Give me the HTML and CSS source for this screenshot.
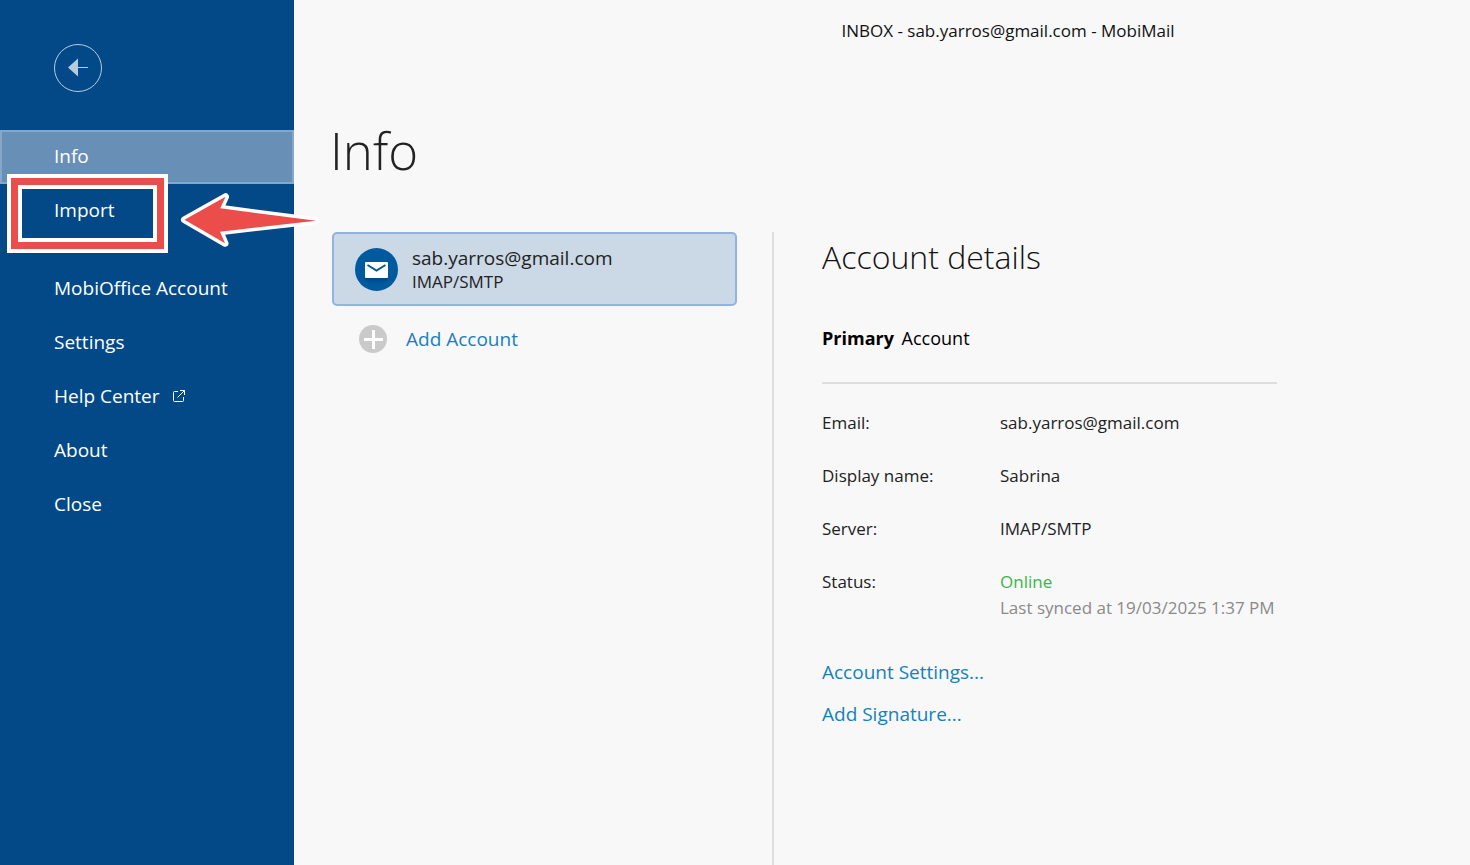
FILE: index.html
```html
<!DOCTYPE html>
<html lang="en">
<head>
  <meta charset="UTF-8" />
  <meta name="viewport" content="width=device-width, initial-scale=1.0" />
  <title>INBOX - sab.yarros@gmail.com - MobiMail</title>
  <link rel="stylesheet" href="styles.css">
</head>
<body>
  <div class="app">
    <aside class="sidebar">
      <button class="back-btn" type="button" aria-label="Back">
        <svg width="48" height="48" viewBox="0 0 48 48">
          <circle cx="24" cy="24" r="23.5" fill="none" stroke="#b5cbe0" />
          <path d="M14 23.5 L24 14.5 V32.5 Z" fill="#b5cbe0" />
          <path d="M23 23.5 H34" stroke="#b5cbe0" />
        </svg>
      </button>
      <nav class="menu">
        <a class="menu-item active" href="#info">Info</a>
        <a class="menu-item" href="#import">Import</a>
        <a class="menu-item spaced" href="#account">MobiOffice Account</a>
        <a class="menu-item" href="#settings">Settings</a>
        <a class="menu-item" href="#help">Help Center
          <svg width="14" height="14" viewBox="0 0 14 14" fill="none" stroke="#fff">
            <path d="M6 2.5 H2.5 Q1.5 2.5 1.5 3.5 V11.5 Q1.5 12.5 2.5 12.5 H10.5 Q11.5 12.5 11.5 11.5 V8" />
            <path d="M8 1.5 H12.5 V6 M12.5 1.5 L5.5 8.5" />
          </svg>
        </a>
        <a class="menu-item" href="#about">About</a>
        <a class="menu-item" href="#close">Close</a>
      </nav>
      <div class="highlight-box"></div>
      <svg class="highlight-arrow" width="142" height="60" viewBox="0 0 142 60">
        <path d="M6.5 29.7 L47.5 6.7 L42.3 18.3 L138 30.7 L42 41.7 L47 53.3 Z" fill="#eb4d4b" stroke="#fff" stroke-width="7" stroke-linejoin="round" paint-order="stroke" />
      </svg>
    </aside>

    <main class="content">
      <header class="title-bar">INBOX - sab.yarros@gmail.com - MobiMail</header>
      <h1>Info</h1>
      <div class="columns">
        <section class="accounts">
          <button class="account-card" type="button">
            <svg width="43" height="43" viewBox="0 0 43 43">
              <defs>
                <linearGradient id="shade" x1="0" y1="0" x2="0" y2="1">
                  <stop offset="0" stop-color="#004585" />
                  <stop offset="1" stop-color="#005a9e" />
                </linearGradient>
              </defs>
              <circle cx="21.5" cy="21.5" r="21.5" fill="#005a9e" />
              <path d="M10 30 H33 L31 36 H12 Z" fill="url(#shade)" />
              <rect x="10" y="14" width="23" height="16" rx="1" fill="#fff" />
              <path d="M12.5 17 L21.5 22.5 L30.5 17" fill="none" stroke="#005a9e" stroke-width="2" />
            </svg>
            <span class="account-text">
              <span class="account-email">sab.yarros@gmail.com</span>
              <span class="account-type">IMAP/SMTP</span>
            </span>
          </button>
          <button class="add-account" type="button">
            <svg width="28" height="28" viewBox="0 0 28 28">
              <circle cx="14" cy="14" r="14" fill="#cacaca" />
              <path d="M5 14.5 H24 M14.5 5 V24" stroke="#fff" stroke-width="3" />
            </svg>
            Add Account
          </button>
        </section>

        <section class="details">
          <h2>Account details</h2>
          <p class="primary"><strong>Primary</strong> Account</p>
          <dl class="info">
            <dt>Email:</dt>
            <dd>sab.yarros@gmail.com</dd>
            <dt>Display name:</dt>
            <dd>Sabrina</dd>
            <dt>Server:</dt>
            <dd>IMAP/SMTP</dd>
            <dt>Status:</dt>
            <dd><span class="online">Online</span><span class="synced">Last synced at 19/03/2025 1:37 PM</span></dd>
          </dl>
          <div class="links">
            <a href="#account-settings">Account Settings...</a>
            <a href="#signature">Add Signature...</a>
          </div>
        </section>
      </div>
    </main>
  </div>
</body>
</html>
```
FILE: styles.css
```css
* {
  box-sizing: border-box;
}
body {
  margin: 0;
  font-family: 'Open Sans', 'Noto Sans', sans-serif;
  font-size: 17px;
  line-height: 26px;
  color: #222;
  background: #f8f8f8;
}
h1, h2, p, dl, dd {
  margin: 0;
}
a {
  text-decoration: none;
}
button {
  font: inherit;
  border: none;
  background: none;
  padding: 0;
  cursor: pointer;
}
svg {
  display: block;
  flex: none;
}
.app {
  display: flex;
  min-height: 100vh;
}

/* Sidebar */
.sidebar {
  position: relative;
  flex: none;
  width: 294px;
  padding-top: 44px;
  background: #034987;
}
.back-btn {
  display: block;
  margin: 0 0 38px 54px;
}
.menu-item {
  display: flex;
  align-items: center;
  gap: 12px;
  height: 54px;
  padding: 0 54px 2px;
  font-size: 19px;
  color: #fff;
}
.menu-item.active {
  padding: 0 52px 2px;
  background: #6890b7;
  border: 2px solid #84a7ca;
}
.menu-item.spaced {
  margin-top: 24px;
}

/* Callout over the Import item */
.highlight-box {
  position: absolute;
  top: 174px;
  left: 7px;
  width: 161px;
  height: 79px;
  border: 4px solid #fff;
  outline: 4px solid #fff;
  outline-offset: -15px;
  box-shadow: inset 0 0 0 7px #eb4d4b;
}
.highlight-arrow {
  position: absolute;
  top: 190px;
  left: 178px;
}

/* Content */
.content {
  flex: 1;
  display: flex;
  flex-direction: column;
  min-width: 0;
}
.title-bar {
  padding: 18px 0 0 252px;
  text-align: center;
  color: #111;
}
h1 {
  margin-top: 70px;
  padding-left: 36px;
  font-size: 51px;
  font-weight: 300;
  line-height: 72px;
}
.columns {
  flex: 1;
  display: flex;
  margin-top: 46px;
}
.accounts {
  flex: none;
  width: 480px;
  padding: 0 35px 0 38px;
  border-right: 2px solid #dedede;
}
.account-card {
  display: flex;
  align-items: center;
  gap: 14px;
  width: 100%;
  height: 74px;
  padding: 0 21px;
  text-align: left;
  color: #222;
  background: #cbd8e5;
  border: 2px solid #92b2df;
  border-radius: 5px;
}
.account-text {
  display: flex;
  flex-direction: column;
  padding-top: 2px;
  line-height: 24px;
}
.account-email {
  font-size: 19px;
}
.add-account {
  display: flex;
  align-items: center;
  gap: 19px;
  margin: 19px 0 0 27px;
  font-size: 19px;
  line-height: 28px;
  color: #1581bd;
}
.details {
  min-width: 527px;
  padding: 0 24px 24px 48px;
}
h2 {
  font-size: 32px;
  font-weight: 300;
  line-height: 50px;
  color: #111;
}
.primary {
  margin-top: 43px;
  padding-bottom: 31px;
  font-size: 18px;
  line-height: 26px;
  color: #000;
  border-bottom: 2px solid #dedede;
}
.primary strong {
  margin-right: 3px;
}
.info {
  display: grid;
  grid-template-columns: 178px auto;
  row-gap: 27px;
  margin-top: 26px;
}
.online, .synced {
  display: block;
}
.online {
  color: #39b54a;
}
.synced {
  color: #8a8a8a;
}
.links {
  display: flex;
  flex-direction: column;
  align-items: flex-start;
  gap: 16px;
  margin-top: 38px;
  font-size: 19px;
}
.links a {
  color: #1581bd;
}
```
